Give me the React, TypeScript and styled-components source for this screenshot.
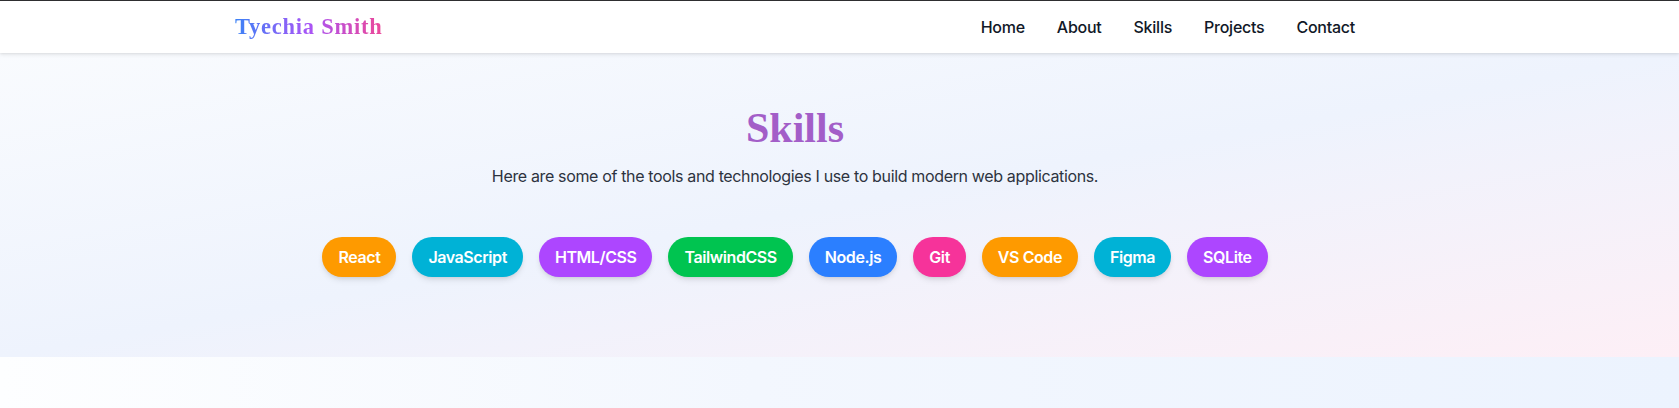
import React from "react";
import styled, { createGlobalStyle } from "styled-components";

const GlobalStyle = createGlobalStyle`
  * { box-sizing: border-box; }
  html, body { margin: 0; padding: 0; }
  body {
    font-family: Inter, "Noto Sans", sans-serif;
    background: #ffffff;
    -webkit-font-smoothing: antialiased;
  }
`;

const Header = styled.header`
  border-top: 1px solid #2e2e30;
  background: #ffffff;
  box-shadow: 0 2px 4px rgba(0, 0, 0, 0.07), 0 1px 2px rgba(0, 0, 0, 0.06);
  padding-right: 89px;
  position: relative;
  z-index: 2;
`;

const HeaderInner = styled.div`
  max-width: 1152px;
  height: 52px;
  margin: 0 auto;
  padding: 0 16px;
  display: flex;
  align-items: center;
  justify-content: space-between;
`;

const Logo = styled.a`
  font-family: "Liberation Serif", "Times New Roman", serif;
  font-weight: 700;
  font-size: 22.5px;
  letter-spacing: 0.75px;
  background: linear-gradient(to right, #3b82f6, #a855f7, #ec4899);
  -webkit-background-clip: text;
  background-clip: text;
  color: transparent;
  text-decoration: none;
`;

const Nav = styled.nav`
  display: flex;
  gap: 32px;
`;

const NavLink = styled.a`
  font-family: Inter, sans-serif;
  font-weight: 500;
  font-size: 16px;
  letter-spacing: -0.25px;
  color: #111827;
  text-decoration: none;
`;

const SkillsSection = styled.section`
  background: linear-gradient(to bottom right, #f9fbfe 0%, #eef3fd 50%, #fdeff6 100%);
  padding: 51px 89px 80px 0;
`;

const SectionInner = styled.div`
  max-width: 1152px;
  margin: 0 auto;
  display: flex;
  flex-direction: column;
  align-items: center;
`;

const Title = styled.h2`
  margin: 0;
  font-family: "Liberation Serif", "Times New Roman", serif;
  font-weight: 700;
  font-size: 42px;
  line-height: 48px;
  color: #a35ec8;
`;

const Subtitle = styled.p`
  margin: 12px 0 0;
  font-family: Inter, sans-serif;
  font-size: 16px;
  line-height: 24px;
  letter-spacing: -0.35px;
  color: #2d3340;
`;

const PillRow = styled.div`
  margin-top: 49px;
  display: flex;
  flex-wrap: wrap;
  justify-content: center;
  gap: 16px;
`;

const Pill = styled.span<{ $bg: string }>`
  display: inline-flex;
  align-items: center;
  height: 40px;
  padding: 0 16px;
  border-radius: 9999px;
  background: ${(p) => p.$bg};
  color: #ffffff;
  font-family: Inter, sans-serif;
  font-weight: 600;
  font-size: 16px;
  letter-spacing: -0.42px;
  box-shadow: 0 4px 6px -1px rgba(0, 0, 0, 0.1), 0 2px 4px -2px rgba(0, 0, 0, 0.1);
`;

const NextSection = styled.section`
  min-height: 400px;
  background: linear-gradient(to right, #fdfeff 0%, #f3f7fe 45%, #ecf3fe 100%);
`;

const skills: { name: string; color: string }[] = [
  { name: "React", color: "#fe9a00" },
  { name: "JavaScript", color: "#00b2d6" },
  { name: "HTML/CSS", color: "#ad46ff" },
  { name: "TailwindCSS", color: "#00c450" },
  { name: "Node.js", color: "#2b7fff" },
  { name: "Git", color: "#f6339a" },
  { name: "VS Code", color: "#fe9a00" },
  { name: "Figma", color: "#00b2d6" },
  { name: "SQLite", color: "#ad46ff" },
];

export default function App() {
  return (
    <>
      <GlobalStyle />
      <Header>
        <HeaderInner>
          <Logo href="#">Tyechia Smith</Logo>
          <Nav>
            <NavLink href="#">Home</NavLink>
            <NavLink href="#">About</NavLink>
            <NavLink href="#">Skills</NavLink>
            <NavLink href="#">Projects</NavLink>
            <NavLink href="#">Contact</NavLink>
          </Nav>
        </HeaderInner>
      </Header>
      <SkillsSection>
        <SectionInner>
          <Title>Skills</Title>
          <Subtitle>
            Here are some of the tools and technologies I use to build modern web applications.
          </Subtitle>
          <PillRow>
            {skills.map((s) => (
              <Pill key={s.name} $bg={s.color}>
                {s.name}
              </Pill>
            ))}
          </PillRow>
        </SectionInner>
      </SkillsSection>
      <NextSection />
    </>
  );
}
